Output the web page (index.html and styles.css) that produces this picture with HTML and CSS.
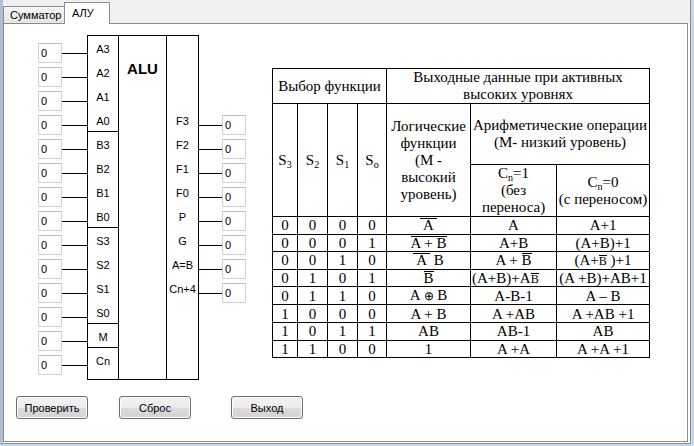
FILE: index.html
```html
<!DOCTYPE html>
<html lang="ru">
<head>
<meta charset="utf-8">
<title>АЛУ</title>
<link rel="stylesheet" href="styles.css">
</head>
<body>
<div class="frame">
  <div class="tabs">
    <div class="tab">Сумматор</div>
    <div class="tab active">АЛУ</div>
  </div>
  <div class="panel">
    <div class="main">
      <div class="diagram">
        <div class="inputs">
          <div class="pin"><div class="val">0</div><div class="wire"></div></div>
          <div class="pin"><div class="val">0</div><div class="wire"></div></div>
          <div class="pin"><div class="val">0</div><div class="wire"></div></div>
          <div class="pin"><div class="val">0</div><div class="wire"></div></div>
          <div class="pin"><div class="val">0</div><div class="wire"></div></div>
          <div class="pin"><div class="val">0</div><div class="wire"></div></div>
          <div class="pin"><div class="val">0</div><div class="wire"></div></div>
          <div class="pin"><div class="val">0</div><div class="wire"></div></div>
          <div class="pin"><div class="val">0</div><div class="wire"></div></div>
          <div class="pin"><div class="val">0</div><div class="wire"></div></div>
          <div class="pin"><div class="val">0</div><div class="wire"></div></div>
          <div class="pin"><div class="val">0</div><div class="wire"></div></div>
          <div class="pin"><div class="val">0</div><div class="wire"></div></div>
          <div class="pin"><div class="val">0</div><div class="wire"></div></div>
        </div>
        <div class="block">
          <div class="col-in">
            <div class="grp">
              <div class="lbl">A3</div><div class="lbl">A2</div><div class="lbl">A1</div><div class="lbl">A0</div>
            </div>
            <div class="grp">
              <div class="lbl">B3</div><div class="lbl">B2</div><div class="lbl">B1</div><div class="lbl">B0</div>
            </div>
            <div class="grp">
              <div class="lbl">S3</div><div class="lbl">S2</div><div class="lbl">S1</div><div class="lbl">S0</div>
            </div>
            <div class="grp one"><div class="lbl">M</div></div>
            <div class="grp last"><div class="lbl">Cn</div></div>
          </div>
          <div class="col-mid"><div class="alu">ALU</div></div>
          <div class="col-out">
            <div class="lbl">F3</div><div class="lbl">F2</div><div class="lbl">F1</div><div class="lbl">F0</div>
            <div class="lbl">P</div><div class="lbl">G</div><div class="lbl">A=B</div><div class="lbl">Cn+4</div>
          </div>
        </div>
        <div class="outputs">
          <div class="pin"><div class="wire"></div><div class="val">0</div></div>
          <div class="pin"><div class="wire"></div><div class="val">0</div></div>
          <div class="pin"><div class="wire"></div><div class="val">0</div></div>
          <div class="pin"><div class="wire"></div><div class="val">0</div></div>
          <div class="pin"><div class="wire"></div><div class="val">0</div></div>
          <div class="pin"><div class="wire"></div><div class="val">0</div></div>
          <div class="pin"><div class="wire"></div><div class="val">0</div></div>
          <div class="pin"><div class="wire"></div><div class="val">0</div></div>
        </div>
      </div>
      <table class="truth">
        <colgroup>
          <col class="c-s3"><col class="c-s"><col class="c-s"><col class="c-s0"><col class="c-log"><col class="c-a1"><col class="c-a0">
        </colgroup>
        <tr class="h1">
          <td colspan="4">Выбор функции</td>
          <td colspan="3">Выходные данные при активных<br>высоких уровнях</td>
        </tr>
        <tr class="h2">
          <td rowspan="2">S<sub>3</sub></td>
          <td rowspan="2">S<sub>2</sub></td>
          <td rowspan="2">S<sub>1</sub></td>
          <td rowspan="2">S<sub>o</sub></td>
          <td rowspan="2">Логические<br>функции<br>(М -<br>высокий<br>уровень)</td>
          <td colspan="2">Арифметические операции<br>(М- низкий уровень)</td>
        </tr>
        <tr class="h3">
          <td>C<sub>n</sub>=1<br>(без<br>переноса)</td>
          <td>C<sub>n</sub>=0<br>(с переносом)</td>
        </tr>
        <tr class="d"><td>0</td><td>0</td><td>0</td><td>0</td><td><span class="ov">&thinsp;A&thinsp;</span></td><td>A</td><td>A+1</td></tr>
        <tr class="d"><td>0</td><td>0</td><td>0</td><td>1</td><td><span class="ov">A + B</span></td><td>A+B</td><td>(A+B)+1</td></tr>
        <tr class="d"><td>0</td><td>0</td><td>1</td><td>0</td><td><span class="ov">&thinsp;A&thinsp;</span>&nbsp;B</td><td>A + <span class="ov">B</span></td><td>(A+<span class="ov sm">B</span>&nbsp;)+1</td></tr>
        <tr class="d"><td>0</td><td>1</td><td>0</td><td>1</td><td><span class="ov">B</span></td><td class="l">(A+B)+A<span class="ov sm">B</span></td><td>(A +B)+AB+1</td></tr>
        <tr class="d"><td>0</td><td>1</td><td>1</td><td>0</td><td>A <span class="xor">⊕</span> B</td><td>A-B-1</td><td>A – B</td></tr>
        <tr class="d"><td>1</td><td>0</td><td>0</td><td>0</td><td>A + B</td><td>A +AB</td><td>A +AB +1</td></tr>
        <tr class="d"><td>1</td><td>0</td><td>1</td><td>1</td><td>AB</td><td>AB-1</td><td>AB</td></tr>
        <tr class="d"><td>1</td><td>1</td><td>0</td><td>0</td><td>1</td><td>A +A</td><td>A +A +1</td></tr>
      </table>
    </div>
    <div class="buttons">
      <button class="btn btn-check">Проверить</button>
      <button class="btn btn-reset">Сброс</button>
      <button class="btn btn-exit">Выход</button>
    </div>
  </div>
</div>
</body>
</html>
```

FILE: styles.css
```css
* { box-sizing: border-box; }

html, body {
  margin: 0;
  padding: 0;
}

body {
  width: 694px;
  height: 446px;
  overflow: hidden;
  background: #c3d7ef;
  font-family: "Liberation Sans", Arial, sans-serif;
  font-size: 11px;
  color: #000;
}

.frame {
  width: 691px;
  height: 444px;
  background: #fff;
  border-left: 3px solid #afc0d5;
  border-right: 1px solid #8d8d8d;
  border-bottom: 1px solid #8d8d8d;
  display: flex;
  flex-direction: column;
}

/* tabs */
.tabs {
  flex: none;
  height: 23px;
  background: #f0f0f0;
  display: flex;
  align-items: flex-end;
}

.tab {
  width: 62px;
  height: 17px;
  border: 1px solid #898c95;
  border-bottom: none;
  background: linear-gradient(#f6f6f6, #e5e5e5);
  padding: 1px 0 0 6px;
  line-height: 15px;
  white-space: nowrap;
}

.tab.active {
  width: 46px;
  height: 22px;
  margin-left: -1px;
  margin-bottom: -1px;
  background: #fff;
  padding: 3px 0 0 7px;
  position: relative;
  z-index: 1;
}

/* panel */
.panel {
  flex: none;
  width: 685px;
  height: 419px;
  border: 1px solid #898c95;
  background: #fff;
  display: flex;
  flex-direction: column;
}

.main {
  display: flex;
  align-items: flex-start;
  padding: 11px 0 0 34px;
}

.diagram {
  display: flex;
  align-items: flex-start;
}

.inputs,
.outputs {
  display: flex;
  flex-direction: column;
  gap: 4px;
}

.inputs { margin-top: 8px; }
.outputs { margin-top: 80px; }

.pin {
  display: flex;
  align-items: center;
  height: 20px;
}

.val {
  width: 24px;
  height: 20px;
  border: 1px solid #d2d2d2;
  border-top-color: #bcbcbc;
  background: #fff;
  padding-left: 2px;
  line-height: 18px;
}

.wire {
  height: 1px;
  background: #000;
}

.inputs .wire { width: 25px; }
.outputs .wire { width: 23px; }

.block {
  display: flex;
  width: 112px;
  height: 345px;
  border: 1px solid #000;
}

.col-in {
  width: 31px;
  border-right: 1px solid #000;
}

.col-mid {
  width: 48px;
  border-right: 1px solid #000;
}

.col-out {
  width: 31px;
  padding-top: 72px;
}

.grp {
  height: 96px;
  border-bottom: 1px solid #000;
}

.grp.one { height: 24px; }

.grp.last {
  height: auto;
  border-bottom: none;
}

.lbl {
  height: 24px;
  padding-top: 2px;
  line-height: 22px;
  text-align: center;
  white-space: nowrap;
}

.alu {
  padding-top: 24px;
  text-align: center;
  font-size: 15px;
  font-weight: bold;
  line-height: 18px;
}

/* table */
.truth {
  margin: 33px 0 0 26px;
  width: 378px;
  border-collapse: collapse;
  table-layout: fixed;
  font-family: "Liberation Serif", "Times New Roman", serif;
  font-size: 15px;
  color: #000;
}

.c-s3 { width: 25px; }
.c-s { width: 30px; }
.c-s0 { width: 29px; }
.c-log { width: 84px; }
.c-a1 { width: 86px; }
.c-a0 { width: 93px; }

.truth td {
  border: 1px solid #000;
  padding: 0;
  text-align: center;
  vertical-align: middle;
  line-height: 17px;
  white-space: nowrap;
}

.truth .h1 { height: 35px; }
.truth .h2 { height: 61px; }
.truth .h3 { height: 51px; }
.truth .d { height: 17.6px; }
.truth .d td { line-height: 16px; }

.truth td.l {
  text-align: left;
  padding-left: 1px;
}

.truth sub {
  font-size: 10px;
  line-height: 0;
  vertical-align: -3px;
}

.ov {
  display: inline-block;
  border-top: 1px solid #000;
  line-height: 12px;
}

.ov.sm {
  font-size: 12px;
  line-height: 10px;
}

.xor { font-size: 12px; }

/* buttons */
.buttons {
  display: flex;
  margin-top: 16px;
  padding-left: 12px;
}

.btn {
  width: 72px;
  height: 23px;
  padding: 0;
  border: 1px solid #707070;
  border-radius: 3px;
  background: linear-gradient(#f3f3f3 0%, #ebebeb 50%, #dddddd 51%, #d2d2d2 100%);
  box-shadow: inset 0 0 0 1px #fbfbfb;
  font-family: "Liberation Sans", Arial, sans-serif;
  font-size: 11px;
  color: #000;
  text-align: center;
}

.btn-reset { margin-left: 31px; }
.btn-exit { margin-left: 40px; }
```
